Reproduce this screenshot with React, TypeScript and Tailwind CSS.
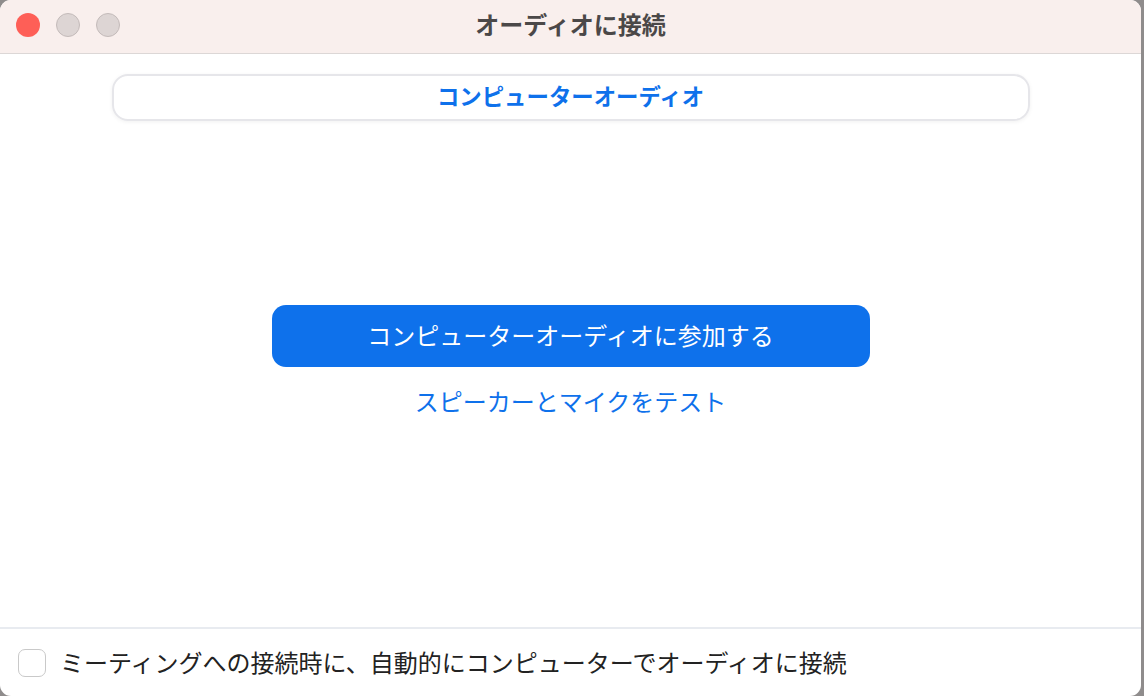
import React from "react";

const jp = { fontFamily: '"Noto Sans CJK JP", "Noto Sans", sans-serif' };

export default function App() {
  return (
    <div className="w-[1144px] h-[696px] bg-[#8f8c8c] flex" style={jp}>
      <div className="w-[1141px] h-full bg-white rounded-[11px] overflow-hidden flex flex-col">
        {/* title bar */}
        <div className="h-[54px] shrink-0 bg-[#f9efed] border-b border-[#dcd7d6] flex items-center relative">
          <div className="flex items-center gap-[16px] pl-[16px] pb-[4px]">
            <span className="w-[24px] h-[24px] rounded-full bg-[#fe5f57]" />
            <span className="w-[24px] h-[24px] rounded-full bg-[#ddd5d4] border border-[#c4bbba]" />
            <span className="w-[24px] h-[24px] rounded-full bg-[#ddd5d4] border border-[#c4bbba]" />
          </div>
          <div className="absolute inset-0 flex items-center justify-center pb-[5px] pointer-events-none">
            <span className="text-[24px] font-bold text-[#4b4848] leading-none">オーディオに接続</span>
          </div>
        </div>

        {/* content */}
        <div className="flex-1 flex flex-col items-center">
          <div className="mt-[20px] w-[918px] h-[47px] rounded-[16px] border-2 border-[#e6e6ea] shadow-[0_1px_4px_rgba(0,0,0,0.06)] flex items-center justify-center pb-[4px]">
            <span className="text-[22.4px] font-bold text-[#0e71eb] leading-none">コンピューターオーディオ</span>
          </div>
          <button className="mt-[184px] w-[598px] h-[62px] rounded-[14px] bg-[#0e71eb] text-white text-[24px] leading-none pb-[3px]">
            コンピューターオーディオに参加する
          </button>
          <div className="mt-[19px] h-[30px] flex items-center text-[24px] text-[#0e71eb] leading-none">
            スピーカーとマイクをテスト
          </div>
        </div>

        {/* footer */}
        <div className="h-[69px] shrink-0 border-t-2 border-[#e8ebf0] flex items-center pl-[18px] gap-[14px]">
          <span className="w-[28px] h-[28px] rounded-[7px] border border-[#c9c9c9] bg-white" />
          <span className="text-[24px] text-[#222] leading-none pb-[2px]">ミーティングへの接続時に、自動的にコンピューターでオーディオに接続</span>
        </div>
      </div>
    </div>
  );
}
